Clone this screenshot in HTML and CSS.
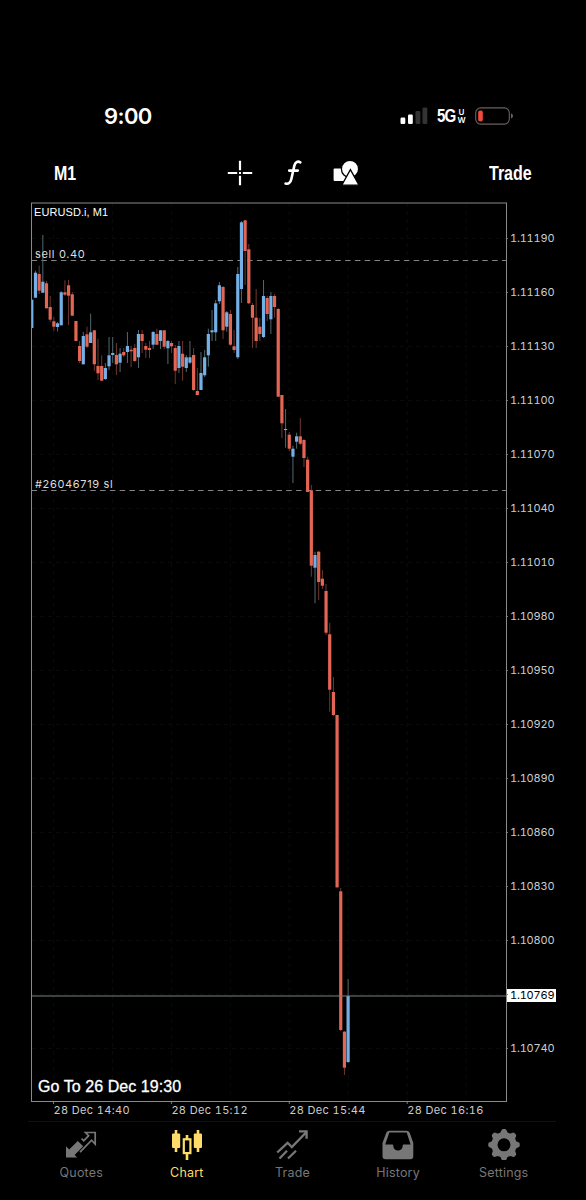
FILE: index.html
```
<!DOCTYPE html>
<html lang="en">
<head>
  <meta charset="utf-8">
  <title>EURUSD.i, M1</title>
  <link rel="stylesheet" href="styles.css">
</head>
<body>
  <div class="screen">
    <div class="status-bar">
      <span class="clock">9:00</span>
      <div class="status-icons">
        <svg class="signal" width="28" height="18" viewBox="0 0 28 18">
          <rect x="0.5" y="10.5" width="4.8" height="6.5" rx="1.2" fill="#fff"/>
          <rect x="8" y="7.5" width="4.8" height="9.5" rx="1.2" fill="#fff"/>
          <rect x="15.5" y="4" width="4.8" height="13" rx="1.2" fill="#333"/>
          <rect x="22.5" y="0.5" width="4.8" height="16.5" rx="1.2" fill="#333"/>
        </svg>
        <span class="network">5G</span>
        <span class="network-type"><span>U</span><span>W</span></span>
        <svg class="battery" width="39" height="18" viewBox="0 0 39 18">
          <rect x="0.7" y="0.9" width="33.6" height="16.2" rx="5" fill="none" stroke="#68625f" stroke-width="1.1"/>
          <rect x="3.2" y="3.6" width="4.6" height="10.8" rx="2" fill="#f4493d"/>
          <path d="M36 6.3q2 .8 2 2.6t-2 2.6z" fill="#68625f"/>
        </svg>
      </div>
    </div>

    <div class="toolbar">
      <span class="timeframe">M1</span>
      <div class="tools">
        <svg width="26" height="26" viewBox="0 0 26 26">
          <path d="M13 .8v9.4M13 15.8v9.4M.8 13h9.4M15.8 13h9.4" stroke="#fff" stroke-width="2.2"/>
          <path d="M13 12v2" stroke="#fff" stroke-width="2"/>
        </svg>
        <svg width="26" height="26" viewBox="0 0 26 26">
          <path d="M20.300 2.300c-2.700-1.600-5.100-.2-6 3.600l-3 13.400c-.8 3.600-2.900 5-5.700 4.200M9.200 10.600h8.600" fill="none" stroke="#fff" stroke-width="2.600" stroke-linecap="round"/>
        </svg>
        <svg width="26" height="26" viewBox="0 0 26 26">
          <rect x="0.6" y="8.4" width="14" height="12.6" rx="1" fill="#fff"/>
          <circle cx="17" cy="8.9" r="8.6" fill="#fff" stroke="#000" stroke-width="1.3"/>
          <path d="M17.4 9.6L26 25.2H8.8z" fill="#fff" stroke="#000" stroke-width="1.3"/>
        </svg>
      </div>
      <span class="trade">Trade</span>
    </div>

    <div class="chart">
      <div class="plot">
        <svg id="candles" width="477" height="904" viewBox="31 202 477 904"></svg>
        <span class="symbol">EURUSD.i, M1</span>
        <span class="order order-sell">sell 0.40</span>
        <span class="order order-sl">#26046719 sl</span>
        <span class="goto">Go To 26 Dec 19:30</span>
      </div>
      <div class="prices">
        <span>1.11190</span>
        <span>1.11160</span>
        <span>1.11130</span>
        <span>1.11100</span>
        <span>1.11070</span>
        <span>1.11040</span>
        <span>1.11010</span>
        <span>1.10980</span>
        <span>1.10950</span>
        <span>1.10920</span>
        <span>1.10890</span>
        <span>1.10860</span>
        <span>1.10830</span>
        <span>1.10800</span>
        <span class="current"><b>1.10769</b></span>
        <span>1.10740</span>
      </div>
    </div>
    <div class="times">
      <span>28 Dec 14:40</span>
      <span>28 Dec 15:12</span>
      <span>28 Dec 15:44</span>
      <span>28 Dec 16:16</span>
    </div>

    <div class="tabs">
      <div class="tab">
        <svg width="34" height="34" viewBox="0 0 34 34">
          <path d="M2 31.5V20.3l3.2 3.2 8.6-8.6 5.4 5.4-8.6 8.6 2.6 2.6z" fill="#777"/>
          <path d="M17.5 12.5l2.2 2.2 5-5-3.2-3.2h9.7v11.5l-3.6-3.8-11.6 12" fill="none" stroke="#777" stroke-width="1.7"/>
        </svg>
        <span>Quotes</span>
      </div>
      <div class="tab active">
        <svg width="34" height="34" viewBox="0 0 34 34">
          <path d="M6 4v22M28 4v22M17 9v5M17 27v7" stroke="#ffdc69" stroke-width="2.6"/>
          <rect x="2" y="7.5" width="8.2" height="14.5" rx="1" fill="#ffdc69"/>
          <rect x="23.8" y="7.5" width="8.2" height="14.5" rx="1" fill="#ffdc69"/>
          <rect x="13.8" y="13.3" width="6.6" height="13.8" fill="none" stroke="#ffdc69" stroke-width="2.2"/>
        </svg>
        <span>Chart</span>
      </div>
      <div class="tab">
        <svg width="34" height="34" viewBox="0 0 34 34">
          <path d="M2.2 26.5l10.4-9.7 4.2 4.2L31 6.5M24 5.3h7.6v7.4M4.5 32.5l7.5-7.8M13 32.5l8-7.8" fill="none" stroke="#777" stroke-width="2.3"/>
        </svg>
        <span>Trade</span>
      </div>
      <div class="tab">
        <svg width="34" height="34" viewBox="0 0 34 34">
          <path fill="#777" fill-rule="evenodd" d="M8.5 4.8h17q2.4 0 3.3 2.2l3.5 10v13.3q0 3-3 3H4.5q-3 0-3-3V17L5.2 7q.9-2.2 3.3-2.2zM8.3 6.5L4.2 18.6h7.3q.8 0 .8 1.3a4.7 4.7 0 0 0 9.4 0q0-1.3.8-1.3h7.1L25.7 6.5z"/>
        </svg>
        <span>History</span>
      </div>
      <div class="tab">
        <svg width="34" height="34" viewBox="0 0 34 34">
          <path id="gear" fill="#777" fill-rule="evenodd"/>
        </svg>
        <span>Settings</span>
      </div>
    </div>
  </div>
  <script src="chart.js"></script>
</body>
</html>
```
FILE: styles.css
```
body {
  margin: 0;
  background: #000;
  color: #fff;
  font-family: Inter, "Liberation Sans", sans-serif;
}

.screen {
  width: 586px;
  height: 1200px;
  box-sizing: border-box;
  padding-top: 98px;
  overflow: hidden;
}

.screen svg {
  display: block;
}

.status-bar {
  display: flex;
  justify-content: space-between;
  align-items: center;
  height: 36px;
  padding: 0 72px 0 104px;
}

.clock {
  font-size: 22px;
  font-weight: 600;
  letter-spacing: -0.6px;
}

.status-icons {
  display: flex;
  align-items: center;
}

.network {
  margin-left: 9px;
  width: 20px;
  font: bold 18px "Liberation Sans", sans-serif;
  letter-spacing: -1px;
  transform: scaleX(0.84);
  transform-origin: left;
}

.network-type {
  display: flex;
  flex-direction: column;
  align-items: center;
  width: 9px;
  font-size: 8px;
  font-weight: 600;
  line-height: 8px;
}

.battery {
  margin-left: 9px;
}

.toolbar {
  display: flex;
  justify-content: space-between;
  align-items: center;
  height: 69px;
  padding: 9px 54px 0 54px;
  box-sizing: border-box;
  font: bold 20px "Liberation Sans", sans-serif;
}

.timeframe,
.trade {
  width: 43px;
  transform: scaleX(0.8);
  transform-origin: left;
}

.tools {
  display: flex;
  gap: 27px;
  margin-right: 1px;
}

.chart {
  display: flex;
  height: 900px;
  margin-top: -1px;
  padding-left: 31px;
}

.plot {
  position: relative;
  width: 476px;
  height: 900px;
}

.symbol,
.order,
.goto {
  position: absolute;
  white-space: nowrap;
}

.symbol {
  left: 3px;
  top: 3px;
  font: 11px/14px "Liberation Sans", sans-serif;
  letter-spacing: 0.08px;
}

.order {
  left: 4px;
  font-size: 11px;
  line-height: 14px;
  letter-spacing: 0.65px;
  color: #ddd;
}

.order-sell {
  top: 45px;
}

.order-sl {
  top: 275px;
}

.goto {
  left: 7px;
  top: 876px;
  font: 16px/18px "Liberation Sans", sans-serif;
  letter-spacing: 0.06px;
  -webkit-text-stroke: 0.3px #fff;
}

.prices {
  display: flex;
  flex-direction: column;
  padding-top: 9px;
  width: 49px;
  font-variant-numeric: tabular-nums;
}

.prices span {
  flex: none;
  height: 54px;
  padding-left: 3px;
  font-size: 11px;
  line-height: 54px;
  letter-spacing: -0.2px;
  color: #ccc;
}

.prices .current {
  box-sizing: border-box;
  padding: 22px 0 0 0;
}

.current b {
  display: block;
  height: 13px;
  padding-left: 3px;
  background: #fff;
  color: #000;
  font-weight: 400;
  line-height: 13px;
}

.times {
  display: flex;
  height: 19px;
  padding-left: 53.5px;
  font-variant-numeric: tabular-nums;
}

.times span {
  width: 117.9px;
  font-size: 11px;
  line-height: 17px;
  letter-spacing: 0.35px;
  color: #ccc;
}

.tabs {
  display: flex;
  width: 528px;
  height: 79px;
  margin-left: 28px;
  box-sizing: border-box;
  border-top: 1px solid #111;
}

.tab {
  display: flex;
  flex-direction: column;
  align-items: center;
  width: 105.6px;
  padding: 4px 0 0 1px;
  box-sizing: border-box;
  color: #777;
  font-size: 12.5px;
  line-height: 16px;
  letter-spacing: 0.2px;
}

.tab span {
  margin-top: 5px;
}

.active {
  color: #ffdc69;
}
```
FILE: chart.js
```
// [high, body top, body bottom, low, bullish]
var candles = [
  [299.7,299.7,328,328,1],[270.7,272.7,297.7,297.7,1],[265.7,274,290.7,294,0],[235,281.7,292.7,292.7,1],
  [281,283.3,308.3,308.3,0],[296,307,319.7,322,0],[317,321.3,326.7,331,0],[322,323.3,327,331.5,1],
  [291,292.3,325.3,325.3,1],[280.3,292.3,294.7,296,0],[280,285.3,295.7,325,0],[292,294.3,315.7,315.7,0],
  [321,321,341,341,0],[341,346,361,363,0],[332,336,364.3,364.3,1],[326.7,334.3,346.7,348,0],
  [313.7,332.3,343,343,1],[330,330.3,364.3,371,0],[339,366,373.3,380,0],[355.3,366,380.7,380.7,0],
  [363,368,379,380,1],[337,355.3,366.3,370,1],[337,353,355,363,1],[343,355,364.3,375,0],
  [348,353.7,362.7,372,1],[348,352,355.3,357,0],[332,346,352,363,1],[346,349.7,351.3,367,0],
  [344,348,361,362,0],[330,334,357.3,368,1],[330,334,341,353,0],[343,346,349.7,358,0],
  [341,348,350,358,0],[331,332,344.7,349,1],[328.7,334,344.7,345,0],[330,330.3,341,349,1],
  [330,330.3,346.7,349,0],[340,341,348.3,364,1],[341,343,346.3,353,0],[345,348,370.7,384,0],
  [341,346,368,373,1],[341,353.7,366.7,380.7,0],[355,357.3,368,372,1],[341,357.3,362.7,364,1],
  [348,355,390,391,0],[368,391,395,395,0],[352,373,390,390,1],[350,357.3,375.3,377,1],
  [328.7,334,355.3,366.7,1],[310,330.3,332.3,341,1],[300,303.3,332.3,341,1],[282,285.3,301.3,304,1],
  [286,287,330.3,339,0],[311,312.3,326.7,331.7,1],[310,314,344.7,346,0],[330,346.3,350,353,0],
  [267,274,357.3,359,1],[221,222.3,289,303,1],[220,220.3,251,285,0],[244,249.3,303.3,304,0],
  [303,305,317.7,348,0],[289,317.7,341,348,0],[318,326.7,334,341,0],[280,296,337,338,1],
  [296,298,314,321,0],[292,296,319.3,334,1],[294,296,307,317.7,0],[308,309,396.7,397,0],
  [395,395,423.3,438,0],[409,429,430,447.7,1],[432,434.7,448.7,451,0],[445.7,448.7,456.7,483,1],
  [432.7,436.3,441.7,448.7,1],[418,436.3,443.7,445,0],[439,440,458,467,0],[456.7,459.7,492,492,0],
  [485,490.3,565.7,576.7,0],[551.7,555,567.7,603.3,1],[551,551.7,582,600,0],[570,578.7,585.7,589,0],
  [584,591,632.7,635,0],[623,634.3,689.7,711.7,0],[677,692,715,716,0],[715,715,887.3,888,0],
  [888,891.3,1030,1031,0],[1031,1031.7,1067.7,1075,0],[979,996,1062,1063,1]
];

function line(x1, y1, x2, y2, color, dash) {
  return '<path d="M' + x1 + ' ' + y1 + 'L' + x2 + ' ' + y2 + '" stroke="' + color + '"' +
    (dash ? ' stroke-dasharray="' + dash + '"' : '') + '/>';
}

var out = '';
var i;

// grid and axis ticks
for (i = 0; i < 8; i++) {
  out += line(53.5 + i * 58.95, 203, 53.5 + i * 58.95, 1101, '#090b0b', '4 4');
  if (i % 2 == 0) out += line(53.5 + i * 58.95, 1101, 53.5 + i * 58.95, 1104, '#777');
}
for (i = 0; i < 16; i++) {
  out += line(32, 238.5 + i * 54, 506, 238.5 + i * 54, '#090b0b', '4 4');
  out += line(506, 238.5 + i * 54, 509, 238.5 + i * 54, '#777');
}

// order levels
out += line(31.5, 260.5, 506, 260.5, '#858585', '5.5 4.3');
out += line(31.5, 490.5, 506, 490.5, '#858585', '5.5 4.3');

for (i = 0; i < candles.length; i++) {
  var c = candles[i];
  var x = 31.8 + i * 3.678;
  out += '<rect x="' + (x - 0.5) + '" y="' + c[0] + '" width="1" height="' + (c[3] - c[0]) + '" fill="' + (c[4] ? '#52686c' : '#71372f') + '"/>';
  out += '<rect x="' + (x - 1.6) + '" y="' + c[1] + '" width="3.2" height="' + (c[2] - c[1]) + '" fill="' + (c[4] ? '#74b0e5' : '#e36554') + '"/>';
}

// bid line and frame
out += line(32, 996, 507, 996, '#7b8080');
out += '<rect x="31.5" y="203" width="475" height="898.5" fill="none" stroke="#8a8a8a"/>';
document.getElementById('candles').innerHTML = out;

// settings gear, eight rounded teeth
var gear = '';
for (i = 0; i < 96; i++) {
  var a = i * Math.PI / 48;
  var r = 14.2 + 1.6 * Math.tanh(2.2 * Math.cos(8 * a));
  gear += (i ? 'L' : 'M') + (17 + r * Math.cos(a)).toFixed(2) + ' ' + (18.8 + r * Math.sin(a)).toFixed(2);
}
gear += 'zM23.5 18.8a6.5 6.5 0 1 0-13 0a6.5 6.5 0 1 0 13 0z';
document.getElementById('gear').setAttribute('d', gear);
```
